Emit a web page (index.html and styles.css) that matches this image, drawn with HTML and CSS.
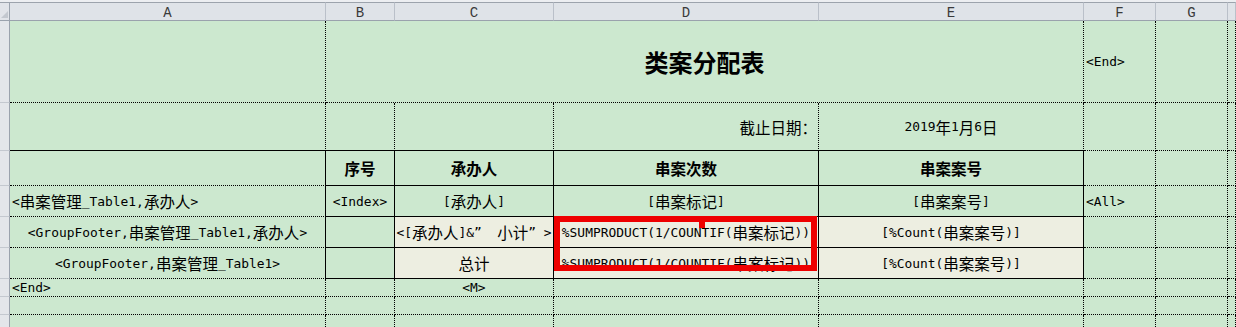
FILE: index.html
```html
<!DOCTYPE html>
<html lang="zh-CN">
<head>
<meta charset="utf-8">
<title>类案分配表</title>
<link rel="stylesheet" href="styles.css">
</head>
<body>
<div class="sheet">
  <!-- column headers -->
  <div class="corner"><span class="tri"></span></div>
  <div class="ch">A</div>
  <div class="ch">B</div>
  <div class="ch">C</div>
  <div class="ch">D</div>
  <div class="ch">E</div>
  <div class="ch">F</div>
  <div class="ch">G</div>
  <div class="ch"></div>

  <!-- row 1 -->
  <div class="rh"></div>
  <div class="c"></div>
  <div class="c title span4"><span class="k">类案分配表</span></div>
  <div class="c l">&lt;End&gt;</div>
  <div class="c"></div>
  <div class="c"></div>

  <!-- row 2 -->
  <div class="rh"></div>
  <div class="c sb"></div>
  <div class="c sb"></div>
  <div class="c sb"></div>
  <div class="c sb r"><span class="k">截止日期：</span></div>
  <div class="c sb">2019<span class="k">年</span>1<span class="k">月</span>6<span class="k">日</span></div>
  <div class="c"></div>
  <div class="c"></div>
  <div class="c"></div>

  <!-- row 3 -->
  <div class="rh"></div>
  <div class="c sr"></div>
  <div class="c sr sb b"><span class="k">序号</span></div>
  <div class="c sr sb b"><span class="k">承办人</span></div>
  <div class="c sr sb b"><span class="k">串案次数</span></div>
  <div class="c sr sb b"><span class="k">串案案号</span></div>
  <div class="c"></div>
  <div class="c"></div>
  <div class="c"></div>

  <!-- row 4 -->
  <div class="rh"></div>
  <div class="c sr l">&lt;<span class="k">串案管理</span>_Table1,<span class="k">承办人</span>&gt;</div>
  <div class="c sr sb">&lt;Index&gt;</div>
  <div class="c sr sb">[<span class="k">承办人</span>]</div>
  <div class="c sr sb">[<span class="k">串案标记</span>]</div>
  <div class="c sr sb">[<span class="k">串案案号</span>]</div>
  <div class="c l">&lt;All&gt;</div>
  <div class="c"></div>
  <div class="c"></div>

  <!-- row 5 -->
  <div class="rh"></div>
  <div class="c sr">&lt;GroupFooter,<span class="k">串案管理</span>_Table1,<span class="k">承办人</span>&gt;</div>
  <div class="c sr sb"></div>
  <div class="c sr sb pale pre">&lt;[<span class="k">承办人</span>]&amp;”  <span class="k">小计</span>” &gt;</div>
  <div class="c sr sb pale">%SUMPRODUCT(1/COUNTIF(<span class="k">串案标记</span>))</div>
  <div class="c sr sb pale">[%Count(<span class="k">串案案号</span>)]</div>
  <div class="c"></div>
  <div class="c"></div>
  <div class="c"></div>

  <!-- row 6 -->
  <div class="rh"></div>
  <div class="c sr">&lt;GroupFooter,<span class="k">串案管理</span>_Table1&gt;</div>
  <div class="c sr sb"></div>
  <div class="c sr sb pale"><span class="k">总计</span></div>
  <div class="c sr sb pale">%SUMPRODUCT(1/COUNTIF(<span class="k">串案标记</span>))</div>
  <div class="c sr sb pale">[%Count(<span class="k">串案案号</span>)]</div>
  <div class="c"></div>
  <div class="c"></div>
  <div class="c"></div>

  <!-- row 7 -->
  <div class="rh"></div>
  <div class="c l">&lt;End&gt;</div>
  <div class="c"></div>
  <div class="c">&lt;M&gt;</div>
  <div class="c"></div>
  <div class="c"></div>
  <div class="c"></div>
  <div class="c"></div>
  <div class="c"></div>

  <!-- row 8 -->
  <div class="rh"></div>
  <div class="c"></div>
  <div class="c"></div>
  <div class="c"></div>
  <div class="c"></div>
  <div class="c"></div>
  <div class="c"></div>
  <div class="c"></div>
  <div class="c"></div>

  <!-- row 9 -->
  <div class="rh"></div>
  <div class="c"></div>
  <div class="c"></div>
  <div class="c"></div>
  <div class="c"></div>
  <div class="c"></div>
  <div class="c"></div>
  <div class="c"></div>
  <div class="c"></div>

  <!-- red highlight drawn over the formula cells -->
  <div class="mark"></div>
  <div class="mark-notch"></div>
</div>
</body>
</html>
```

FILE: styles.css
```css
* {
  box-sizing: border-box;
  margin: 0;
  padding: 0;
}

html, body {
  width: 1236px;
  height: 327px;
  overflow: hidden;
}

body {
  background: #eceef1;
  font-family: "DejaVu Sans Mono", "Noto Sans CJK SC", monospace;
  font-size: 12.9px;
  color: #000;
}

.sheet {
  position: relative;
  padding-top: 2px;
  display: grid;
  grid-template-columns: 10px 316px 69px 159px 265px 265px 72px 72px 8px;
  grid-template-rows: 19px 82px 48px 35px 31px 31px 31px 18px 18px 18px;
}

/* column header strip */
.corner {
  position: relative;
  background: #e1e4e9;
  border-top: 1px solid #9ca3ac;
  border-bottom: 1px solid #9aa2ad;
  border-right: 1px solid #9aa2ad;
}

.corner .tri {
  position: absolute;
  right: 1px;
  bottom: 2px;
  width: 0;
  height: 0;
  border-left: 7px solid transparent;
  border-bottom: 7px solid #c3c8cf;
}

.ch {
  background: #dfe3e8;
  border-top: 1px solid #9ca3ac;
  border-bottom: 1px solid #9aa2ad;
  border-right: 1px solid #bac0c9;
  display: flex;
  align-items: center;
  justify-content: center;
  padding-top: 2px;
  font-family: "Liberation Mono", monospace;
  font-size: 14px;
  color: #3a3a3a;
}

/* row header strip */
.rh {
  background: #e3e6ea;
  border-right: 1px solid #9aa2ad;
  border-bottom: 1px solid #c3c8cf;
}

/* cells */
.c {
  background: #cce8cf;
  border-right: 1px dotted #000;
  border-bottom: 1px dotted #000;
  display: flex;
  align-items: center;
  justify-content: center;
  white-space: nowrap;
}

.pre {
  white-space: pre;
}

.l {
  justify-content: flex-start;
  padding-left: 2px;
}

.r {
  justify-content: flex-end;
  padding-right: 1px;
}

.sr {
  border-right-style: solid;
}

.sb {
  border-bottom-style: solid;
}

.pale {
  background: #edeee1;
}

.span4 {
  grid-column: span 4;
}

.k {
  font-family: "Noto Sans CJK SC", sans-serif;
  font-size: 15.5px;
}

.b .k {
  font-weight: 700;
}

.title .k {
  font-size: 24px;
  font-weight: 700;
}

/* red highlight over D5:D6 */
.mark {
  position: absolute;
  left: 554px;
  top: 216px;
  width: 263px;
  height: 55px;
  border: 6px solid #ee0000;
}

.mark-notch {
  position: absolute;
  left: 699px;
  top: 216px;
  width: 6px;
  height: 12px;
  background: #ee0000;
}
```
